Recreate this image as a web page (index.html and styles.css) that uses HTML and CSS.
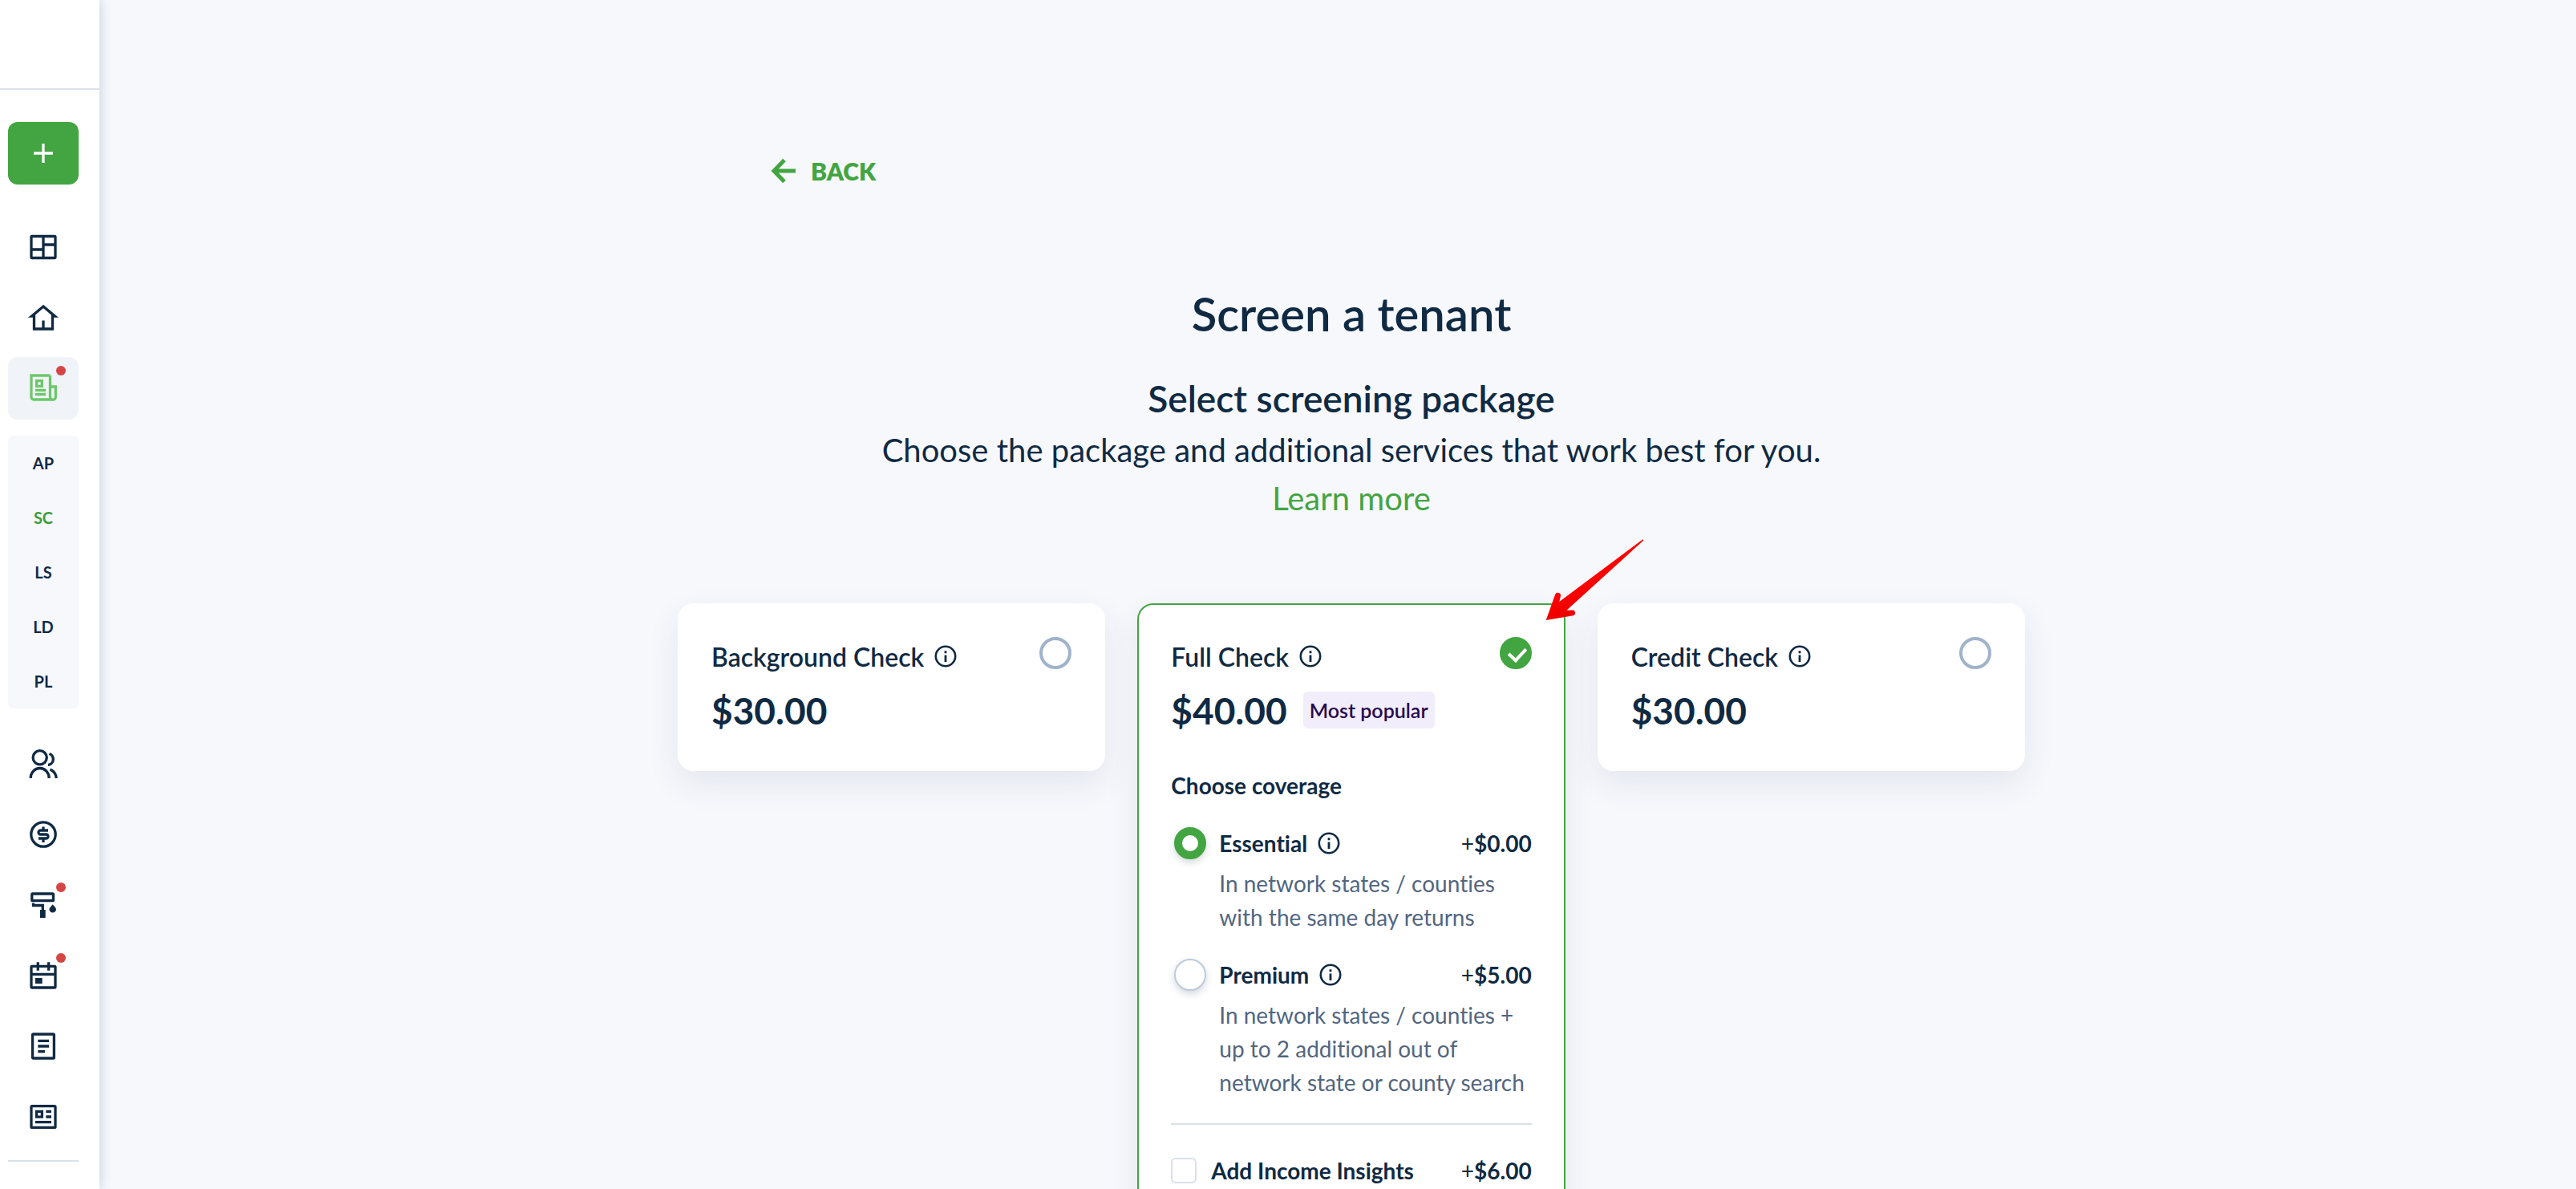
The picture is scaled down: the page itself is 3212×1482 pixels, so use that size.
FILE: index.html
```html
<!DOCTYPE html>
<html lang="en">
<head>
    <meta charset="UTF-8">
    <meta name="viewport" content="width=device-width, initial-scale=1.0">
    <title>Screen a tenant</title>
    <link rel="stylesheet" href="styles.css">
</head>
<body>
    <svg class="sprite" aria-hidden="true">
        <symbol id="info" viewBox="0 0 28 28">
            <circle cx="14" cy="14" r="12.200" fill="none" stroke="currentColor" stroke-width="2.600"/>
            <path d="M14 12.500v8.500M14 7.300v3" fill="none" stroke="currentColor" stroke-width="2.800"/>
        </symbol>
    </svg>

    <div class="app">
        <aside class="sidebar">
            <div class="sidebar-top"></div>
            <nav class="sidebar-nav">
                <button class="add-button" aria-label="Add new">
                    <svg class="icon" viewBox="0 0 40 40"><path d="M8 20h24M20 8v24"/></svg>
                </button>
                <a class="nav-item" href="#" aria-label="Dashboard">
                    <svg class="icon" viewBox="0 0 40 40"><rect x="5" y="6.5" width="30" height="27" rx="1"/><path d="M20 6.5v27M5 23h15M20 17h15"/></svg>
                </a>
                <a class="nav-item" href="#" aria-label="Properties">
                    <svg class="icon" viewBox="0 0 40 40"><path d="M20 6L5.500 18.200H8.500V34H31.500V18.200H34.500ZM20 23.500V34"/></svg>
                </a>
                <a class="nav-item active" href="#" aria-label="Leasing">
                    <svg class="icon" viewBox="0 0 40 40"><path d="M28.500 4H5v27a3 3 0 0 0 3 3h24M28.500 18h6.800v13a3.400 3.400 0 0 1-6.800 0V4M11.700 10.700h6.600v6.600h-6.600ZM10 22.300h13M10 27.500h13"/></svg>
                    <span class="dot"></span>
                </a>
                <div class="subnav">
                    <a href="#">AP</a>
                    <a href="#" class="current">SC</a>
                    <a href="#">LS</a>
                    <a href="#">LD</a>
                    <a href="#">PL</a>
                </div>
                <a class="nav-item" href="#" aria-label="Contacts">
                    <svg class="icon" viewBox="0 0 40 40"><circle cx="15.700" cy="12.300" r="8.600"/><path d="M4.200 38A11.500 12.500 0 0 1 27.200 38M27.500 7.500C30.500 8.500 32.300 11.500 32.300 14.500C32.300 18 29.500 21 26 21.500M28.500 27C33 29 36 33 36.200 38"/></svg>
                </a>
                <a class="nav-item" href="#" aria-label="Accounting">
                    <svg class="icon" viewBox="0 0 40 40"><circle cx="20" cy="20" r="15.200"/><path d="M26 15H16.500a2.500 2.500 0 0 0 0 5h7a2.500 2.500 0 0 1 0 5H14M20 10.500V15M20 25v5"/></svg>
                </a>
                <a class="nav-item" href="#" aria-label="Maintenance">
                    <svg class="icon" viewBox="0 0 40 40"><rect x="5.800" y="6" width="26.700" height="8.700" rx="1"/><path d="M7.500 17.500V20.500H19.300V27"/><path class="solid" d="M16 26h6.700v10H16ZM31.700 19.300C33.500 22 36 23.500 36 25.500a4.300 4 0 0 1-8.600 0C27.400 23.500 30 22 31.700 19.300Z"/></svg>
                    <span class="dot"></span>
                </a>
                <a class="nav-item" href="#" aria-label="Calendar">
                    <svg class="icon" viewBox="0 0 40 40"><rect x="5" y="8.300" width="30" height="26.700" rx="1"/><path d="M5 18.300h30M13.300 3.300v10.400M26.700 3.300v10.400"/><path class="solid" d="M10 23h8.700v7H10Z"/></svg>
                    <span class="dot"></span>
                </a>
                <a class="nav-item" href="#" aria-label="Documents">
                    <svg class="icon" viewBox="0 0 40 40"><rect x="6.600" y="5" width="26.800" height="30" rx="1"/><path d="M13.300 13.300H27M13.300 20H27M13.300 26.700H22"/></svg>
                </a>
                <a class="nav-item" href="#" aria-label="Reports">
                    <svg class="icon" viewBox="0 0 40 40"><rect x="5" y="6.600" width="30" height="26.800" rx="1"/><path d="M11.600 13.300h6.800v6.800h-6.800ZM23.300 13.300H30M23.300 20H30M10 26.700H30"/></svg>
                </a>
                <hr class="nav-line">
            </nav>
        </aside>

        <main class="main">
            <div class="page">
                <a class="back" href="#">
                    <svg class="back-icon" viewBox="0 0 32 32"><path d="M17 2.500L4 16L17 29.500M4 16H31" fill="none" stroke="currentColor" stroke-width="5"/></svg>
                    BACK
                </a>

                <header class="intro">
                    <h1>Screen a tenant</h1>
                    <h2>Select screening package</h2>
                    <p>Choose the package and additional services that work best for you.</p>
                    <a href="#">Learn more</a>
                </header>

                <div class="packages">
                    <section class="card">
                        <div class="card-head">
                            <label for="background">Background Check</label>
                            <svg class="info"><use href="#info"/></svg>
                            <input class="pick" type="radio" name="package" id="background">
                        </div>
                        <div class="price-row">
                            <span class="price">$30.00</span>
                        </div>
                    </section>

                    <section class="card selected">
                        <div class="card-head">
                            <label for="full">Full Check</label>
                            <svg class="info"><use href="#info"/></svg>
                            <input class="pick" type="radio" name="package" id="full" checked>
                        </div>
                        <div class="price-row">
                            <span class="price">$40.00</span>
                            <span class="badge">Most popular</span>
                        </div>

                        <h3>Choose coverage</h3>
                        <div class="option">
                            <div class="option-head">
                                <input class="radio" type="radio" name="coverage" id="essential" checked>
                                <label for="essential">Essential</label>
                                <svg class="info"><use href="#info"/></svg>
                                <span class="extra"><span class="plus">+</span>$0.00</span>
                            </div>
                            <p>In network states / counties with the same day returns</p>
                        </div>
                        <div class="option">
                            <div class="option-head">
                                <input class="radio" type="radio" name="coverage" id="premium">
                                <label for="premium">Premium</label>
                                <svg class="info"><use href="#info"/></svg>
                                <span class="extra"><span class="plus">+</span>$5.00</span>
                            </div>
                            <p>In network states / counties + up to 2 additional out of network state or county search</p>
                        </div>

                        <div class="addon">
                            <input class="checkbox" type="checkbox" id="income">
                            <label for="income">Add Income Insights</label>
                            <span class="extra"><span class="plus">+</span>$6.00</span>
                        </div>

                        <svg class="pointer" viewBox="0 0 132 110" aria-hidden="true">
                            <defs>
                                <linearGradient id="red" x1="0.3" y1="0.6" x2="0.450" y2="0.850">
                                    <stop offset="0" stop-color="#ff0000"/>
                                    <stop offset="1" stop-color="#e80000"/>
                                </linearGradient>
                            </defs>
                            <path fill="url(#red)" d="M7.700 105L19.300 72.500C20.500 69.500 26.500 70.500 26 74.500L24.300 82L127.700 4.700C128.700 4.200 129.500 5 128.800 6L33.300 92.700L40.500 92.500C44.800 92.500 45.500 98.300 41.500 99.300Z"/>
                        </svg>
                    </section>

                    <section class="card">
                        <div class="card-head">
                            <label for="credit">Credit Check</label>
                            <svg class="info"><use href="#info"/></svg>
                            <input class="pick" type="radio" name="package" id="credit">
                        </div>
                        <div class="price-row">
                            <span class="price">$30.00</span>
                        </div>
                    </section>
                </div>
            </div>
        </main>
    </div>
</body>
</html>
```
FILE: styles.css
```css
* {
    box-sizing: border-box;
}
body {
    margin: 0;
    font-family: Lato, "Open Sans", sans-serif;
    font-variant-ligatures: none;
    color: #102a43;
    background: #f7f8fc;
}
h1, h2, h3, p {
    margin: 0;
    font-weight: 600;
}
a {
    color: inherit;
    text-decoration: none;
}
input {
    appearance: none;
    margin: 0;
    flex: none;
}
.sprite {
    display: none;
}
.app {
    display: flex;
    height: 100vh;
    overflow: hidden;
}

/* sidebar */
.sidebar {
    flex: none;
    width: 124px;
    background: #fff;
    box-shadow: 2px 0 12px rgba(98, 135, 170, 0.3);
}
.sidebar-top {
    height: 112px;
    border-bottom: 2px solid #dce1ec;
}
.sidebar-nav {
    display: flex;
    flex-direction: column;
    gap: 10px;
    width: 108px;
    padding: 40px 10px 0;
}
.add-button,
.nav-item {
    position: relative;
    display: flex;
    align-items: center;
    justify-content: center;
    height: 78px;
    border-radius: 12px;
}
.add-button {
    margin-bottom: 29px;
    border: 0;
    background: #43a541;
    color: #fff;
}
.icon {
    width: 40px;
    height: 40px;
    fill: none;
    stroke: currentColor;
    stroke-width: 3.3;
}
.icon .solid {
    fill: currentColor;
    stroke: none;
}
.nav-item.active {
    background: #f0f4f8;
    color: #6cc76a;
}
.dot {
    position: absolute;
    top: 11px;
    right: 16px;
    width: 12px;
    height: 12px;
    border-radius: 50%;
    background: #d64545;
}
.subnav {
    margin: 10px 0 20px;
    border-radius: 6px;
    background: #f7f8fc;
}
.subnav a {
    display: block;
    font-size: 20px;
    font-weight: 700;
    line-height: 68px;
    text-align: center;
}
.subnav .current {
    color: #3f9c3a;
}
.nav-line {
    width: 100%;
    margin: 5px 0 0;
    border: 0;
    border-top: 2px solid #d9e2ec;
}

/* page */
.main {
    flex: 1;
    padding: 190px 0 0 34px;
}
.page {
    max-width: 1680px;
    margin: 0 auto;
}
.back {
    display: inline-flex;
    align-items: center;
    gap: 18px;
    margin-left: 116px;
    font-size: 30px;
    font-weight: 800;
    line-height: 46px;
    color: #43a541;
}
.back-icon {
    width: 32px;
    height: 32px;
}
.intro {
    padding: 115px 0 101px;
    text-align: center;
    font-size: 40px;
    line-height: 60px;
}
.intro h1 {
    font-size: 58px;
    line-height: 80px;
}
.intro h2 {
    margin: 36px 0 4px;
    font-size: 46px;
}
.intro p {
    font-weight: 400;
}
.intro a {
    color: #43a541;
}

/* package cards */
.packages {
    display: grid;
    grid-template-columns: repeat(3, 1fr);
    align-items: start;
    gap: 40px;
}
.card {
    position: relative;
    padding: 40px 40px 51px;
    border: 2px solid #fff;
    border-radius: 20px;
    background: #fff;
    box-shadow: 0 16px 40px rgba(30, 60, 110, 0.09);
}
.card.selected {
    border-color: #43a541;
}
.card-head {
    display: flex;
    align-items: center;
    height: 48px;
    font-size: 32px;
    font-weight: 600;
}
.info {
    flex: none;
    width: 28px;
    height: 28px;
    margin-left: 13px;
}
.pick {
    position: relative;
    align-self: flex-start;
    width: 40px;
    height: 40px;
    margin-left: auto;
    border: 4px solid #a0b3cb;
    border-radius: 50%;
}
.pick:checked {
    border-color: #43a541;
    background: #43a541;
}
.pick:checked::before {
    content: "";
    position: absolute;
    top: 5px;
    left: 11px;
    width: 10px;
    height: 17px;
    border: solid #fff;
    border-width: 0 4px 4px 0;
    transform: rotate(43deg);
}
.price-row {
    display: flex;
    align-items: center;
    gap: 20px;
    height: 46px;
    margin-top: 20px;
}
.price {
    font-size: 46px;
    font-weight: 700;
}
.badge {
    padding: 0 8px;
    border-radius: 6px;
    background: #f1edfb;
    color: #240a4e;
    font-size: 25px;
    font-weight: 600;
    line-height: 46px;
}
.card h3 {
    margin: 50px 0 30px;
    font-size: 28px;
    font-weight: 700;
    line-height: 42px;
}
.option {
    margin-bottom: 30px;
    padding-left: 60px;
}
.option-head,
.addon {
    display: flex;
    align-items: center;
    font-size: 28px;
    font-weight: 700;
    line-height: 42px;
}
.option-head {
    margin: 0 0 8px -56px;
}
.option p {
    color: #52667f;
    font-size: 28px;
    font-weight: 400;
    line-height: 42px;
}
.radio {
    width: 40px;
    height: 40px;
    margin-right: 16px;
    border: 2px solid #bccbdd;
    border-radius: 50%;
    background: #fff;
    box-shadow: 0 4px 10px rgba(16, 42, 67, 0.18);
}
.radio:checked {
    border: 10px solid #43a541;
}
.extra {
    margin-left: auto;
}
.plus {
    font-weight: 400;
}
.addon {
    padding-top: 36px;
    border-top: 2px solid #dce0ec;
}
.checkbox {
    width: 32px;
    height: 32px;
    margin-right: 18px;
    border: 2px solid #dce0ec;
    border-radius: 6px;
}

/* arrow over the selected package */
.pointer {
    position: absolute;
    top: -86px;
    right: -102px;
    z-index: 1;
    width: 132px;
    height: 110px;
}
```
